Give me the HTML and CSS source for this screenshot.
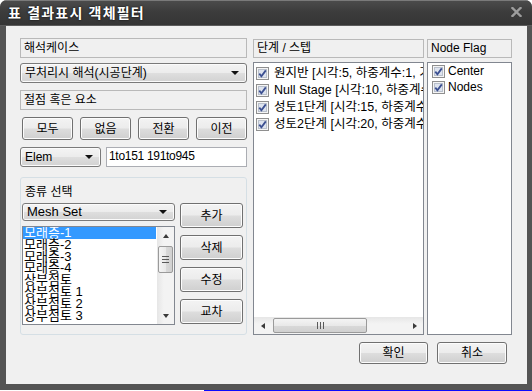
FILE: index.html
```html
<!DOCTYPE html>
<html lang="ko">
<head>
<meta charset="utf-8">
<title>표 결과표시 객체필터</title>
<link rel="stylesheet" href="styles.css">
</head>
<body>
<div class="window">
  <div class="titlebar">
    <span class="title">표 결과표시 객체필터</span>
    <svg class="close" width="11" height="10" viewBox="0 0 11 10"><path d="M1.5 1 L9.5 9 M9.5 1 L1.5 9" stroke="#9d9d9d" stroke-width="2.4" stroke-linecap="square"/></svg>
  </div>
  <div class="client">
    <div class="columns">
      <div class="col-left">
        <div class="label">해석케이스</div>
        <div class="combo case"><span>무처리시 해석(시공단계)</span><i class="arrow"></i></div>
        <div class="label second">절점 혹은 요소</div>
        <div class="btnrow">
          <button class="btn">모두</button>
          <button class="btn">없음</button>
          <button class="btn">전환</button>
          <button class="btn">이전</button>
        </div>
        <div class="elemrow">
          <div class="combo elem"><span>Elem</span><i class="arrow"></i></div>
          <div class="textbox">1to151 191to945</div>
        </div>
        <div class="group">
          <div class="group-title">종류 선택</div>
          <div class="group-body">
            <div class="group-left">
              <div class="combo mesh"><span>Mesh Set</span><i class="arrow"></i></div>
              <div class="listbox">
                <ul class="items">
                  <li class="selected">모래층-1</li>
                  <li>모래층-2</li>
                  <li>모래층-3</li>
                  <li>모래층-4</li>
                  <li>상부점토</li>
                  <li>상부점토 1</li>
                  <li>상부점토 2</li>
                  <li>상부점토 3</li>
                </ul>
                <div class="vscroll">
                  <div class="sarrow"><i class="tri-up"></i></div>
                  <div class="vthumb"><svg width="7" height="7" viewBox="0 0 7 7"><path d="M0 .5h7M0 3.5h7M0 6.5h7" stroke="#5a5a5a"/></svg></div>
                  <div class="vtrack"></div>
                  <div class="sarrow"><i class="tri-down"></i></div>
                </div>
              </div>
            </div>
            <div class="group-btns">
              <button class="btn gbtn">추가</button>
              <button class="btn gbtn">삭제</button>
              <button class="btn gbtn">수정</button>
              <button class="btn gbtn">교차</button>
            </div>
          </div>
        </div>
      </div>

      <div class="col-mid">
        <div class="label mlabel">단계 / 스텝</div>
        <div class="clist">
          <div class="checks mid">
            <div class="check"><svg width="13" height="13" viewBox="0 0 13 13"><rect x=".5" y=".5" width="12" height="12" fill="#f5f5f5" stroke="#8f8f8f"/><rect x="2.5" y="2.5" width="8" height="8" fill="#dde3ee" stroke="#b9c0cc"/><path d="M3.3 6.6 L5.4 9.2 L9.8 3.4" fill="none" stroke="#3b4f91" stroke-width="1.8"/></svg><span>원지반 [시각:5, 하중계수:1, 기타]</span></div>
            <div class="check"><svg width="13" height="13" viewBox="0 0 13 13"><rect x=".5" y=".5" width="12" height="12" fill="#f5f5f5" stroke="#8f8f8f"/><rect x="2.5" y="2.5" width="8" height="8" fill="#dde3ee" stroke="#b9c0cc"/><path d="M3.3 6.6 L5.4 9.2 L9.8 3.4" fill="none" stroke="#3b4f91" stroke-width="1.8"/></svg><span>Null Stage [시각:10, 하중계수:1]</span></div>
            <div class="check"><svg width="13" height="13" viewBox="0 0 13 13"><rect x=".5" y=".5" width="12" height="12" fill="#f5f5f5" stroke="#8f8f8f"/><rect x="2.5" y="2.5" width="8" height="8" fill="#dde3ee" stroke="#b9c0cc"/><path d="M3.3 6.6 L5.4 9.2 L9.8 3.4" fill="none" stroke="#3b4f91" stroke-width="1.8"/></svg><span>성토1단계 [시각:15, 하중계수:1]</span></div>
            <div class="check"><svg width="13" height="13" viewBox="0 0 13 13"><rect x=".5" y=".5" width="12" height="12" fill="#f5f5f5" stroke="#8f8f8f"/><rect x="2.5" y="2.5" width="8" height="8" fill="#dde3ee" stroke="#b9c0cc"/><path d="M3.3 6.6 L5.4 9.2 L9.8 3.4" fill="none" stroke="#3b4f91" stroke-width="1.8"/></svg><span>성토2단계 [시각:20, 하중계수:1]</span></div>
          </div>
          <div class="hscroll">
            <div class="sarrow h"><i class="tri-left"></i></div>
            <div class="hthumb"><svg width="7" height="7" viewBox="0 0 7 7"><path d="M.5 0v7M3.5 0v7M6.5 0v7" stroke="#5a5a5a"/></svg></div>
            <div class="htrack"></div>
            <div class="sarrow h"><i class="tri-right"></i></div>
          </div>
        </div>
      </div>

      <div class="col-right">
        <div class="label mlabel">Node Flag</div>
        <div class="clist">
          <div class="checks right">
            <div class="check"><svg width="13" height="13" viewBox="0 0 13 13"><rect x=".5" y=".5" width="12" height="12" fill="#f5f5f5" stroke="#8f8f8f"/><rect x="2.5" y="2.5" width="8" height="8" fill="#dde3ee" stroke="#b9c0cc"/><path d="M3.3 6.6 L5.4 9.2 L9.8 3.4" fill="none" stroke="#3b4f91" stroke-width="1.8"/></svg><span>Center</span></div>
            <div class="check"><svg width="13" height="13" viewBox="0 0 13 13"><rect x=".5" y=".5" width="12" height="12" fill="#f5f5f5" stroke="#8f8f8f"/><rect x="2.5" y="2.5" width="8" height="8" fill="#dde3ee" stroke="#b9c0cc"/><path d="M3.3 6.6 L5.4 9.2 L9.8 3.4" fill="none" stroke="#3b4f91" stroke-width="1.8"/></svg><span>Nodes</span></div>
          </div>
        </div>
      </div>
    </div>

    <div class="footer">
      <button class="btn fbtn ok">확인</button>
      <button class="btn fbtn">취소</button>
    </div>
  </div>
</div>
<div class="bluebar"></div>
</body>
</html>
```

FILE: styles.css
```css
* { box-sizing: border-box; margin: 0; padding: 0; }

body {
  width: 532px;
  height: 391px;
  overflow: hidden;
  background: #fff;
  color: #000;
  font: 12px "Liberation Sans", "Noto Sans CJK KR", sans-serif;
}

.window {
  width: 532px;
  height: 390px;
  background: #545454;
  border-radius: 7px 7px 0 0;
  display: flex;
  flex-direction: column;
  overflow: hidden;
}

.titlebar {
  flex: none;
  height: 26px;
  display: flex;
  align-items: center;
  justify-content: space-between;
  padding: 0 10px 0 8px;
  background: linear-gradient(#4b4b4b, #3c3c3c 45%, #353535);
  border-top: 1px solid #7a7a7a;
  border-bottom: 1px solid #5c5c5c;
}

.title {
  color: #fff;
  font-weight: bold;
  font-size: 14px;
  line-height: 16px;
  letter-spacing: 1.2px;
  text-shadow: 0 0 2px #000;
}

.close { display: block; margin-top: -2px; }

.client {
  flex: none;
  height: 358px;
  margin: 0 5px 0 6px;
  background: #f0f0f0;
  padding: 12px 15px 0 14px;
  display: flex;
  flex-direction: column;
}

.columns { display: flex; height: 297px; flex: none; }

.col-left { width: 227px; display: flex; flex-direction: column; }
.col-mid { width: 171px; margin-left: 6px; display: flex; flex-direction: column; }
.col-right { width: 85px; margin-left: 3px; display: flex; flex-direction: column; }

.label {
  flex: none;
  height: 20px;
  border: 1px solid #b9b9b9;
  padding-left: 3px;
  line-height: 18px;
  white-space: nowrap;
  overflow: hidden;
}
.label.second { margin-top: 7px; }
.label.mlabel { margin-top: 1px; height: 19px; line-height: 17px; }

.combo {
  flex: none;
  height: 20px;
  border: 1px solid #7a7a7a;
  border-radius: 3px;
  background: linear-gradient(#f4f4f4, #ececec 48%, #dedede 52%, #d2d2d2);
  box-shadow: inset 0 0 0 1px #fbfbfb;
  display: flex;
  align-items: center;
  justify-content: space-between;
  padding: 0 7px 0 4px;
  line-height: 16px;
  white-space: nowrap;
}
.combo.case { margin-top: 5px; }
.combo.elem { width: 81px; }
.combo.mesh { height: 18px; font-size: 13px; }

.arrow {
  width: 0;
  height: 0;
  border-left: 4px solid transparent;
  border-right: 4px solid transparent;
  border-top: 4px solid #111;
}

.btn {
  font: inherit;
  color: #000;
  border: 1px solid #707070;
  border-radius: 3px;
  background: linear-gradient(#f3f3f3, #ececec 48%, #dddddd 52%, #cfcfcf);
  box-shadow: inset 0 0 0 1px #fcfcfc;
  line-height: 16px;
  cursor: default;
}

.btnrow {
  flex: none;
  margin-top: 7px;
  height: 23px;
  padding-left: 2px;
  display: flex;
  gap: 7px;
}
.btnrow .btn { width: 51px; height: 23px; }

.elemrow {
  flex: none;
  margin-top: 7px;
  height: 20px;
  display: flex;
  gap: 5px;
}

.textbox {
  flex: 1;
  border: 1px solid #abadb3;
  background: #fff;
  padding: 1px 0 0 2px;
  line-height: 14px;
  letter-spacing: -0.3px;
}

.group {
  flex: none;
  margin-top: 10px;
  height: 158px;
  border: 1px solid #d5dfe5;
  border-radius: 3px;
  padding: 6px 3px 9px 1px;
  display: flex;
  flex-direction: column;
}

.group-title { height: 16px; line-height: 16px; padding-left: 3px; }

.group-body { margin-top: 3px; display: flex; gap: 5px; flex: 1; }

.group-left { width: 153px; display: flex; flex-direction: column; }

.listbox {
  margin-top: 5px;
  height: 99px;
  border: 1px solid #828790;
  background: #fff;
  display: flex;
  overflow: hidden;
}

.items {
  list-style: none;
  flex: 1;
  overflow: hidden;
  font-size: 13px;
  line-height: 11.8px;
}
.items li { height: 11.8px; padding-left: 1px; white-space: nowrap; margin-right: 1px; }
.items li.selected { background: #3399ff; color: #fff; }

.vscroll {
  width: 17px;
  flex: none;
  display: flex;
  flex-direction: column;
  background: linear-gradient(90deg, #e6e6e6, #f3f3f3 40%, #f3f3f3);
}

.sarrow {
  flex: none;
  width: 17px;
  height: 17px;
  display: flex;
  align-items: center;
  justify-content: center;
}

.tri-up, .tri-down, .tri-left, .tri-right { width: 0; height: 0; }
.tri-up { border-left: 3.5px solid transparent; border-right: 3.5px solid transparent; border-bottom: 4px solid #3a3a3a; }
.tri-down { border-left: 3.5px solid transparent; border-right: 3.5px solid transparent; border-top: 4px solid #3a3a3a; }
.tri-left { border-top: 3.5px solid transparent; border-bottom: 3.5px solid transparent; border-right: 4px solid #3a3a3a; }
.tri-right { border-top: 3.5px solid transparent; border-bottom: 3.5px solid transparent; border-left: 4px solid #3a3a3a; }

.vthumb {
  flex: none;
  margin: 2px 1px 0;
  height: 27px;
  border: 1px solid #9a9a9a;
  border-radius: 2px;
  background: linear-gradient(90deg, #f4f4f4, #e9e9e9 50%, #d9d9d9 52%, #d0d0d0);
  display: flex;
  align-items: center;
  justify-content: center;
}
.vtrack { flex: 1; }

.group-btns { width: 63px; display: flex; flex-direction: column; gap: 7px; }
.gbtn { height: 25px; width: 63px; }

.clist {
  flex: 1;
  margin-top: 4px;
  border: 1px solid #828790;
  background: #fff;
  display: flex;
  flex-direction: column;
  overflow: hidden;
}

.checks { flex: 1; overflow: hidden; }
.checks.mid { padding: 2px 0 0 1px; font-size: 12.5px; }
.checks.right { padding: 0 0 0 4px; }

.check {
  display: flex;
  align-items: center;
  height: 17px;
  white-space: nowrap;
  line-height: 15px;
}
.checks.right .check { height: 16px; }
.check svg { flex: none; margin-right: 5px; }
.checks.mid .check svg { margin-left: 1px; }
.checks.right .check svg { margin-right: 3px; }

.hscroll {
  flex: none;
  height: 17px;
  display: flex;
  background: linear-gradient(#e6e6e6, #f3f3f3 40%, #f3f3f3);
}
.hthumb {
  flex: none;
  width: 94px;
  margin: 1px 0 1px 2px;
  border: 1px solid #9a9a9a;
  border-radius: 2px;
  background: linear-gradient(#f4f4f4, #e9e9e9 50%, #d9d9d9 52%, #d0d0d0);
  display: flex;
  align-items: center;
  justify-content: center;
}
.htrack { flex: 1; }

.footer {
  flex: none;
  margin-top: 7px;
  display: flex;
  justify-content: flex-end;
  gap: 9px;
  padding-right: 5px;
}
.fbtn { height: 22px; width: 70px; }
.fbtn.ok { width: 69px; }

.bluebar {
  height: 1px;
  margin-left: 204px;
  background: #0a0aff;
}
```
